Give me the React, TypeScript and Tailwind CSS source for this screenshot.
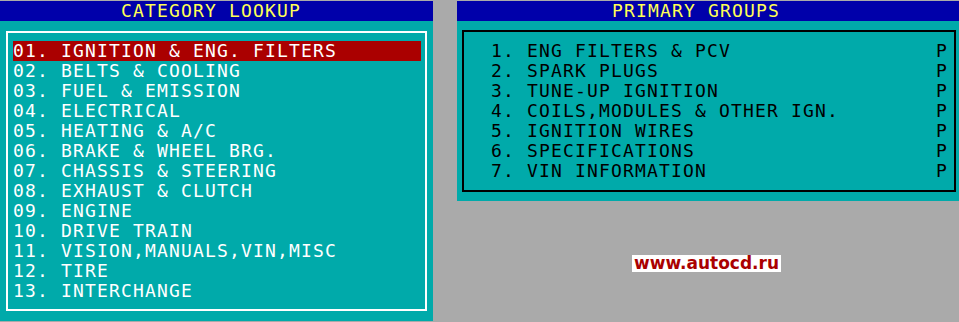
const categories = [
  "01. IGNITION & ENG. FILTERS",
  "02. BELTS & COOLING",
  "03. FUEL & EMISSION",
  "04. ELECTRICAL",
  "05. HEATING & A/C",
  "06. BRAKE & WHEEL BRG.",
  "07. CHASSIS & STEERING",
  "08. EXHAUST & CLUTCH",
  "09. ENGINE",
  "10. DRIVE TRAIN",
  "11. VISION,MANUALS,VIN,MISC",
  "12. TIRE",
  "13. INTERCHANGE",
];

const groups = [
  "1. ENG FILTERS & PCV",
  "2. SPARK PLUGS",
  "3. TUNE-UP IGNITION",
  "4. COILS,MODULES & OTHER IGN.",
  "5. IGNITION WIRES",
  "6. SPECIFICATIONS",
  "7. VIN INFORMATION",
];

// DOS-style text mode font: 12px cells
const mono = "font-['DejaVu_Sans_Mono',monospace] text-[18px] tracking-[1.16px] leading-[20px] whitespace-pre";

export default function App() {
  const selected = 0;

  return (
    <div className="flex h-[322px] w-[959px] gap-[24px] overflow-hidden bg-[#aaaaaa] pt-[1px]">
      {/* Category lookup */}
      <div className="flex h-[320px] w-[433px] flex-col bg-[#00aaaa]">
        <div className={`flex h-[20px] items-center justify-center bg-[#0000aa] pr-[11px] text-[#ffff55] ${mono}`}>
          CATEGORY LOOKUP
        </div>
        <div className="mx-[6px] my-[10px] flex-1 border-2 border-white pl-[5px] pr-[4px] pt-[8px]">
          {categories.map((c, i) => (
            <div
              key={c}
              className={`h-[20px] text-white ${mono} ${i === selected ? "bg-[#aa0000]" : ""}`}
            >
              {c}
            </div>
          ))}
        </div>
      </div>

      {/* Primary groups */}
      <div className="flex w-[502px] flex-col">
        <div className="flex h-[200px] flex-col bg-[#00aaaa]">
          <div className={`flex h-[20px] items-center justify-center bg-[#0000aa] pr-[24px] text-[#ffff55] ${mono}`}>
            PRIMARY GROUPS
          </div>
          <div className="mb-[9px] ml-[5px] mr-[3px] mt-[9px] flex-1 border-2 border-black pl-[27px] pr-[6px] pt-[9px]">
            {groups.map((g) => (
              <div key={g} className={`flex h-[20px] justify-between text-black ${mono}`}>
                <span>{g}</span>
                <span>P</span>
              </div>
            ))}
          </div>
        </div>
        <div className="ml-[175px] mt-[54px] w-fit bg-white px-[2px] font-['DejaVu_Sans',sans-serif] text-[17px] font-bold leading-[17px] text-[#aa0000]">
          www.autocd.ru
        </div>
      </div>
    </div>
  );
}
